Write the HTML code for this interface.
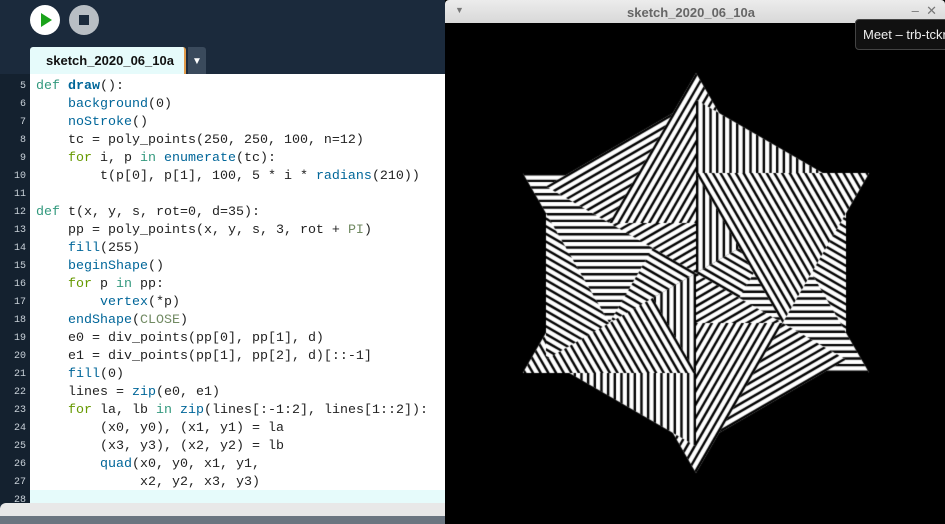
<!DOCTYPE html>
<html><head><meta charset="utf-8"><style>
*{margin:0;padding:0;box-sizing:border-box}
html,body{width:945px;height:524px;overflow:hidden;background:#1b2a3c;font-family:"Liberation Sans",sans-serif;position:relative}
.btn{position:absolute;top:5px;width:30px;height:30px;border-radius:50%}
#play{left:30px;background:#fff}
#play:after{content:"";position:absolute;left:11px;top:8px;border-left:11px solid #1aa31a;border-top:7px solid transparent;border-bottom:7px solid transparent}
#stop{left:69px;background:#b8bec4}
#stop:after{content:"";position:absolute;left:10px;top:10px;width:10px;height:10px;background:#1b2a3c}
#tab{position:absolute;left:30px;top:47px;width:156px;height:27px;background:#e6fbfb;border-right:2px solid #e09a4a;border-radius:3px 3px 0 0;font-weight:bold;font-size:13px;color:#111;padding:6px 0 0 16px}
#dd{position:absolute;left:188px;top:47px;width:18px;height:27px;background:#3a4a5c;border-radius:0 3px 0 0;color:#fff;font-size:10px;text-align:center;padding-top:9px}
#gut{position:absolute;left:0;top:74px;width:30px;height:430px;background:#14212f}
#code{position:absolute;left:30px;top:74px;width:415px;height:429px;background:#fff;overflow:hidden}
.ln{position:absolute;left:0;width:26px;text-align:right;font-family:"Liberation Mono",monospace;font-size:10px;color:#c8d0d8}
pre{position:absolute;left:6px;top:4px;font-family:"Liberation Mono",monospace;font-size:13.33px;line-height:18px;color:#222}
#hl{position:absolute;left:0;top:416px;width:415px;height:13px;background:#e6fbfb}
.k{color:#33997e}.f{color:#006699;font-weight:bold}.b{color:#006699}.g{color:#669900}.c{color:#718a62}
#sb{position:absolute;left:0;top:503px;width:445px;height:13px;background:#e8e8e8;border-radius:6px 0 0 0}
#bot{position:absolute;left:0;top:516px;width:445px;height:8px;background:#6b7580}
#win{position:absolute;left:445px;top:0;width:500px;height:524px;background:#000}
#tb{position:absolute;left:0;top:0;width:500px;height:23px;background:linear-gradient(#ececec,#d8d8d8);border-radius:4px 4px 0 0;font-size:13px;font-weight:bold;color:#666;padding-top:5px}
#cv{position:absolute;left:1px;top:23px}
#tip{position:absolute;left:855px;top:19px;width:100px;height:31px;background:#111;border:1px solid #444;border-radius:4px;color:#eee;font-size:13px;padding:7px 0 0 7px;white-space:nowrap}
</style></head><body>
<div class="btn" id="play"></div><div class="btn" id="stop"></div>
<div id="tab">sketch_2020_06_10a</div><div id="dd">▼</div>
<div id="gut"></div>
<div id="code"><div id="hl"></div>
<pre><span class="k">def</span> <span class="f">draw</span>():
    <span class="b">background</span>(0)
    <span class="b">noStroke</span>()
    tc = poly_points(250, 250, 100, n=12)
    <span class="g">for</span> i, p <span class="k">in</span> <span class="b">enumerate</span>(tc):
        t(p[0], p[1], 100, 5 * i * <span class="b">radians</span>(210))

<span class="k">def</span> t(x, y, s, rot=0, d=35):
    pp = poly_points(x, y, s, 3, rot + <span class="c">PI</span>)
    <span class="b">fill</span>(255)
    <span class="b">beginShape</span>()
    <span class="g">for</span> p <span class="k">in</span> pp:
        <span class="b">vertex</span>(*p)
    <span class="b">endShape</span>(<span class="c">CLOSE</span>)
    e0 = div_points(pp[0], pp[1], d)
    e1 = div_points(pp[1], pp[2], d)[::-1]
    <span class="b">fill</span>(0)
    lines = <span class="b">zip</span>(e0, e1)
    <span class="g">for</span> la, lb <span class="k">in</span> <span class="b">zip</span>(lines[:-1:2], lines[1::2]):
        (x0, y0), (x1, y1) = la
        (x3, y3), (x2, y2) = lb
        <span class="b">quad</span>(x0, y0, x1, y1,
             x2, y2, x3, y3)
</pre></div>
<div id="lns"></div>
<div id="sb"></div><div id="bot"></div>
<div id="win"><div id="tb"><span style="position:absolute;left:182px;top:5px">sketch_2020_06_10a</span><span style="position:absolute;left:10px;top:5px;font-size:9px;color:#777">▼</span><span style="position:absolute;right:8px;top:3px;color:#777;font-weight:normal">–&nbsp;&nbsp;✕</span></div>
<canvas id="cv" width="500" height="501"></canvas></div>
<div id="tip">Meet – trb-tckr</div>
<script>
var l=document.getElementById('lns'),h='';
for(var i=5;i<=28;i++){h+='<div class="ln" style="top:'+(81+(i-5)*18)+'px">'+i+'</div>';}
l.innerHTML=h;
var c=document.getElementById('cv').getContext('2d');
c.fillStyle='#000';c.fillRect(0,0,500,501);
function pp(x,y,r,n,rot){var a=[];for(var i=0;i<n;i++){var t=rot+i*2*Math.PI/n;a.push([x+r*Math.cos(t),y+r*Math.sin(t)]);}return a;}
function lp(a,b,f){return [a[0]+(b[0]-a[0])*f,a[1]+(b[1]-a[1])*f];}
function tri(x,y,s,rot){var p=pp(x,y,s,3,rot+Math.PI);
c.fillStyle='#fff';c.beginPath();c.moveTo(p[0][0],p[0][1]);c.lineTo(p[1][0],p[1][1]);c.lineTo(p[2][0],p[2][1]);c.closePath();c.fill();
c.fillStyle='#000';var per=1/22.5,bw=0.36*per;
for(var t=0;t<1;t+=per){var t2=Math.min(1,t+bw);
var a0=lp(p[0],p[1],t),a1=lp(p[2],p[1],t),b0=lp(p[0],p[1],t2),b1=lp(p[2],p[1],t2);
c.beginPath();c.moveTo(a0[0],a0[1]);c.lineTo(a1[0],a1[1]);c.lineTo(b1[0],b1[1]);c.lineTo(b0[0],b0[1]);c.closePath();c.fill();}}
var tc=pp(250,250,100,12,0);
for(var i=0;i<12;i++)tri(tc[i][0],tc[i][1],100,5*i*210*Math.PI/180);
</script>
</body></html>
